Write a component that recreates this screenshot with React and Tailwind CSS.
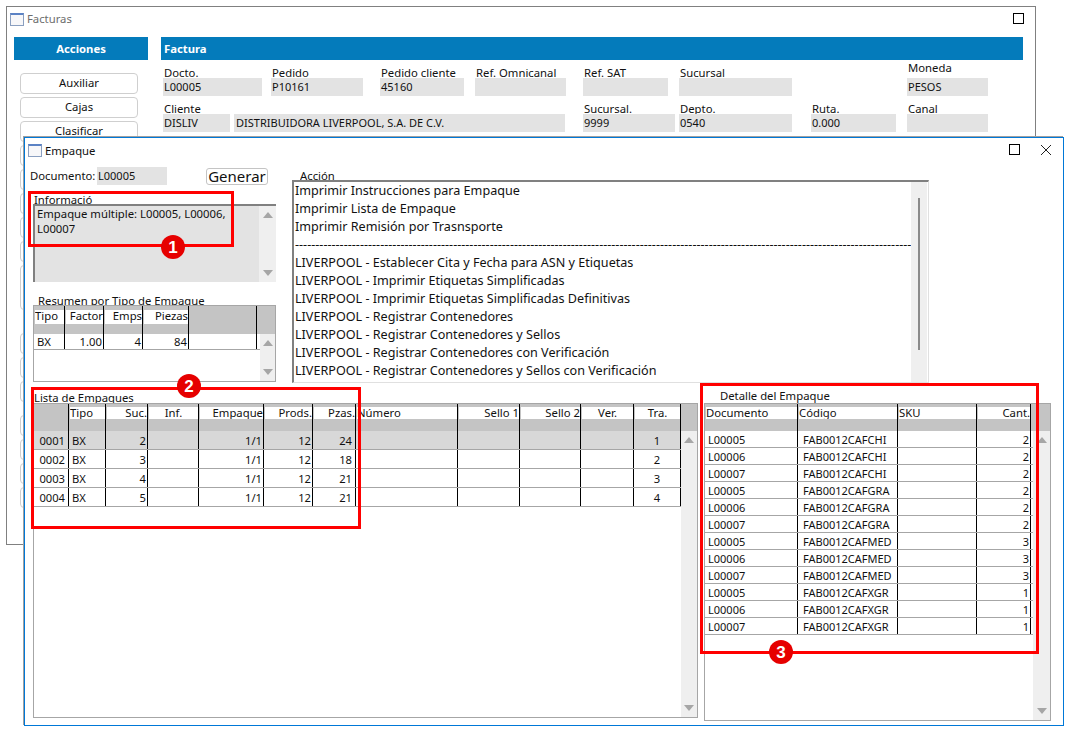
const F = "font-['Noto_Sans','Open_Sans',sans-serif]";

function Up() {
  return <svg width="10" height="6" viewBox="0 0 10 6" className="block"><polygon points="5,0 10,6 0,6" fill="#a6a6a6" /></svg>;
}
function Down() {
  return <svg width="10" height="6" viewBox="0 0 10 6" className="block"><polygon points="0,0 10,0 5,6" fill="#a6a6a6" /></svg>;
}
function Scroll({ className }) {
  return (
    <div className={"flex flex-col items-center justify-between bg-[#efefef] " + className}>
      <Up />
      <Down />
    </div>
  );
}

function Field({ label, value, wrap, labelBox = "h-[11px]" }) {
  return (
    <div className={wrap}>
      <div className={"overflow-hidden whitespace-nowrap leading-[12px] pl-[1px] " + labelBox}>{label}</div>
      <div className="h-[18px] bg-[#e3e3e3] text-[11px] leading-[18px] pl-[1px] whitespace-nowrap">{value}</div>
    </div>
  );
}

function Btn({ children, className = "h-[21px]" }) {
  return (
    <div className={"w-[118px] shrink-0 rounded-[4px] border border-[#cfcfcf] bg-white text-center leading-[18px] " + className}>
      {children}
    </div>
  );
}

function WinIcon() {
  return <div className="h-[13px] w-[14px] shrink-0 border border-[#8a9fc0] border-t-2 border-t-[#5b82c4] bg-[#f7f7f9]" />;
}

function Grid({ cols, rows, headH, rowH, className, strip, scroll, cellText = "" }) {
  return (
    <div className={"flex flex-col border border-[#a6a6a6] bg-white " + className}>
      <div className={"flex shrink-0 bg-[#c4c4c4] " + headH}>
        {cols.map((c, i) => (
          <div key={i} className={"shrink-0 border-r border-black pl-[1px] " + c.w}>
            {c.label !== undefined && (
              <div className={"overflow-hidden whitespace-nowrap bg-white leading-[12px] " + strip + " " + (c.h || "text-left")}>{c.label}</div>
            )}
          </div>
        ))}
      </div>
      <div className="flex min-h-0 flex-1">
        <div className="min-w-0 flex-1">
          {rows.map((r, ri) => (
            <div key={ri} className={"flex border-b border-[#a6a6a6] " + rowH + " " + (r.sel ? "bg-[#d8d8d8]" : "")}>
              {cols.map((c, i) => (
                <div key={i} className={"shrink-0 overflow-hidden whitespace-nowrap border-r border-black " + c.w + " " + (c.a || "text-left pl-[3px]") + " " + cellText}>
                  {r.v[i]}
                </div>
              ))}
            </div>
          ))}
        </div>
        {scroll}
      </div>
    </div>
  );
}

const resumenCols = [
  { w: "w-[31px]", label: "Tipo", a: "pl-[3px]" },
  { w: "w-[39px]", label: "Factor", h: "text-right", a: "text-right pr-[1px]" },
  { w: "w-[39px]", label: "Emps", h: "text-right", a: "text-right pr-[1px]" },
  { w: "w-[46px]", label: "Piezas", h: "text-right", a: "text-right pr-[1px]" },
  { w: "w-[68px]" },
];

const listaCols = [
  { w: "w-[35px]", a: "text-right pr-[3px]" },
  { w: "w-[37px]", label: "Tipo", a: "pl-[3px]" },
  { w: "w-[42px]", label: "Suc.", h: "text-right", a: "text-right pr-[1px]" },
  { w: "w-[51px]", label: "Inf.", h: "text-center" },
  { w: "w-[65px]", label: "Empaque", h: "text-right", a: "text-right pr-[1px]" },
  { w: "w-[49px]", label: "Prods.", h: "text-right", a: "text-right pr-[1px]" },
  { w: "w-[43px]", label: "Pzas.", h: "text-right", a: "text-right pr-[3px]" },
  { w: "w-[102px]", label: "Número" },
  { w: "w-[62px]", label: "Sello 1", h: "text-right" },
  { w: "w-[61px]", label: "Sello 2", h: "text-right" },
  { w: "w-[53px]", label: "Ver.", h: "text-center" },
  { w: "w-[47px]", label: "Tra.", h: "text-center", a: "text-center" },
];
const listaRows = [
  { sel: true, v: ["0001", "BX", "2", "", "1/1", "12", "24", "", "", "", "", "1"] },
  { v: ["0002", "BX", "3", "", "1/1", "12", "18", "", "", "", "", "2"] },
  { v: ["0003", "BX", "4", "", "1/1", "12", "21", "", "", "", "", "3"] },
  { v: ["0004", "BX", "5", "", "1/1", "12", "21", "", "", "", "", "4"] },
];

const detalleCols = [
  { w: "w-[93px]", label: "Documento", a: "pl-[3px]" },
  { w: "w-[100px]", label: "Código", a: "pl-[5px]" },
  { w: "w-[79px]", label: "SKU" },
  { w: "w-[54px]", label: "Cant.", h: "text-right", a: "text-right pr-[1px]" },
];
const codes = ["FAB0012CAFCHI", "FAB0012CAFGRA", "FAB0012CAFMED", "FAB0012CAFXGR"];
const qty = ["2", "2", "3", "1"];
const docs = ["L00005", "L00006", "L00007"];
const detalleRows = codes.flatMap((c, i) => docs.map((d) => ({ v: [d, c, "", qty[i]] })));

const acciones = [
  "Imprimir Instrucciones para Empaque",
  "Imprimir Lista de Empaque",
  "Imprimir Remisión por Trasnsporte",
  "---------------------------------------------------------------------------------------------------------------------------------------------------------",
  "LIVERPOOL - Establecer Cita y Fecha para ASN y Etiquetas",
  "LIVERPOOL - Imprimir Etiquetas Simplificadas",
  "LIVERPOOL - Imprimir Etiquetas Simplificadas Definitivas",
  "LIVERPOOL - Registrar Contenedores",
  "LIVERPOOL - Registrar Contenedores y Sellos",
  "LIVERPOOL - Registrar Contenedores con Verificación",
  "LIVERPOOL - Registrar Contenedores y Sellos con Verificación",
];

function Badge({ n, className }) {
  return (
    <div className={"absolute z-30 flex h-[24px] w-[24px] items-center justify-center rounded-full bg-[#e60000] text-[17px] font-bold leading-none text-white font-['Liberation_Sans',sans-serif] " + className}>
      {n}
    </div>
  );
}
function RedBox({ className }) {
  return <div className={"absolute z-20 border-[3px] border-[#ff0000] " + className} />;
}

export default function App() {
  return (
    <div className={"relative h-[734px] w-[1071px] overflow-hidden bg-white text-[11.3px] text-[#111] " + F}>
      {/* Facturas window */}
      <div className="absolute left-[6px] top-[6px] flex h-[539px] w-[1030px] flex-col border border-[#808080] bg-white">
        <div className="flex h-[30px] shrink-0 items-start px-[3px] pt-[6px]">
          <WinIcon />
          <span className="ml-[3px] leading-[12px] text-[#6d6d6d]">Facturas</span>
          <div className="ml-auto mr-[8px] h-[11px] w-[11px] border border-black" />
        </div>
        <div className="flex flex-1 pl-[7px] pr-[12px]">
          <div className="w-[134px] shrink-0">
            <div className="h-[23px] bg-[#047bbb] text-center font-bold leading-[23px] text-white">Acciones</div>
            <div className="ml-[6px] mt-[13px] flex flex-col gap-[3px]">
              <Btn>Auxiliar</Btn>
              <Btn>Cajas</Btn>
              <Btn>Clasificar</Btn>
              <Btn />
              <Btn />
              <Btn />
              <Btn />
              <Btn />
              <Btn className="h-[45px]" />
              <Btn className="mt-[20px] h-[21px]" />
              <Btn />
              <Btn />
              <Btn className="mt-[10px] h-[21px]" />
              <Btn />
              <Btn />
              <Btn />
            </div>
          </div>
          <div className="ml-[13px] flex-1">
            <div className="h-[23px] bg-[#047bbb] pl-[3px] font-bold leading-[23px] text-white">Factura</div>
            <div className="ml-[2px] mt-[2px] flex items-end">
              <Field label="Docto." value="L00005" wrap="w-[99px] mr-[9px]" />
              <Field label="Pedido" value="P10161" wrap="w-[92px] mr-[17px]" />
              <Field label="Pedido cliente" value="45160" wrap="w-[84px] mr-[11px]" />
              <Field label="Ref. Omnicanal" value="" wrap="w-[91px] mr-[17px]" />
              <Field label="Ref. SAT" value="" wrap="w-[85px] mr-[11px]" />
              <Field label="Sucursal" value="" wrap="w-[113px] mr-[115px]" />
              <Field label="Moneda" value="PESOS" wrap="w-[81px]" labelBox="h-[16px]" />
            </div>
            <div className="ml-[2px] mt-[7px] flex items-end">
              <Field label="Cliente" value="DISLIV" wrap="w-[67px] mr-[4px]" />
              <Field label="" value={<span className="pl-[1px]">DISTRIBUIDORA LIVERPOOL, S.A. DE C.V.</span>} wrap="w-[331px] mr-[18px]" />
              <Field label="Sucursal." value="9999" wrap="w-[92px] mr-[4px]" />
              <Field label="Depto." value="0540" wrap="w-[113px] mr-[19px]" />
              <Field label="Ruta." value="0.000" wrap="w-[85px] mr-[11px]" />
              <Field label="Canal" value="" wrap="w-[81px]" />
            </div>
          </div>
        </div>
      </div>

      {/* Empaque window */}
      <div className="absolute left-[24px] top-[137px] z-10 flex h-[589px] w-[1040px] flex-col border border-[#0078d7] bg-white shadow-[-1px_-1px_0_#a0a0a0]">
        <div className="flex h-[26px] shrink-0 items-start px-[3px] pt-[6px]">
          <WinIcon />
          <span className="ml-[3px] leading-[13px]">Empaque</span>
          <div className="ml-auto flex items-start">
            <div className="h-[11px] w-[11px] border border-black" />
            <svg width="12" height="12" viewBox="0 0 12 12" className="ml-[20px] mr-[8px]">
              <path d="M1 1 L11 11 M11 1 L1 11" stroke="#222" strokeWidth="1" fill="none" />
            </svg>
          </div>
        </div>

        <div className="flex h-[219px] shrink-0">
          {/* left column */}
          <div className="w-[267px] shrink-0">
            <div className="flex h-[21px] items-start pl-[5px] pt-[3px]">
              <span className="w-[67px] whitespace-nowrap leading-[18px]">Documento:</span>
              <div className="h-[18px] w-[70px] bg-[#e3e3e3] pl-[1px] text-[11px] leading-[18px]">L00005</div>
              <div className="ml-[39px] mt-[1px] h-[17px] w-[62px] rounded-[3px] border border-[#c4c4c4] text-center text-[15px] leading-[15px]">Generar</div>
            </div>
            <div className="ml-[9px] mt-[8px] h-[11px] overflow-hidden leading-[14px]">Informació</div>
            <div className="ml-[8px] flex h-[78px] w-[243px] border-l-2 border-t-2 border-[#808080] bg-[#e3e3e3]">
              <div className="flex-1 whitespace-pre-line pl-[2px] leading-[15px]">{"Empaque múltiple: L00005, L00006,\nL00007"}</div>
              <Scroll className="w-[17px] py-[6px]" />
            </div>
            <div className="ml-[13px] mt-[12px] h-[11px] overflow-hidden leading-[14px]">Resumen por Tipo de Empaque</div>
            <Grid
              className="ml-[8px] h-[77px] w-[243px]"
              headH="h-[28px]"
              rowH="h-[16px] leading-[16px]"
              strip="mt-[4px] h-[14px]"
              cols={resumenCols}
              rows={[{ v: ["BX", "1.00", "4", "84", ""] }]}
              scroll={<Scroll className="w-[15px] py-[6px]" />}
            />
          </div>
          {/* accion column */}
          <div className="w-[637px] shrink-0">
            <div className="ml-[8px] h-[16px] overflow-hidden pt-[4px] leading-[15px]">Acción</div>
            <div className="flex h-[203px] border-b border-l-2 border-r border-t-2 border-b-[#e0e0e0] border-l-[#808080] border-r-[#e0e0e0] border-t-[#808080] pr-[1px]">
              <div className="min-w-0 flex-1 overflow-hidden whitespace-nowrap pl-[1px] text-[12.6px] leading-[18px]">
                {acciones.map((a) => <div key={a}>{a}</div>)}
              </div>
              <div className="flex w-[16px] shrink-0 justify-center bg-[#efefef] pt-[16px]">
                <div className="h-[152px] w-[2px] bg-[#8a8a8a]" />
              </div>
            </div>
          </div>
        </div>

        <div className="flex min-h-0 flex-1">
          {/* Lista */}
          <div className="ml-[8px] flex w-[665px] shrink-0 flex-col">
            <div className="ml-[1px] h-[20px] overflow-hidden pt-[8px] leading-[14px]">Lista de Empaques</div>
            <Grid
              className="h-[315px]"
              headH="h-[27px]"
              rowH="h-[19px] leading-[20px]"
              strip="mt-[3px] h-[12px]"
              cols={listaCols}
              rows={listaRows}
              cellText="text-[11.2px]"
              scroll={<Scroll className="ml-auto w-[16px] py-[6px]" />}
            />
          </div>
          {/* Detalle */}
          <div className="ml-[6px] flex w-[347px] shrink-0 flex-col">
            <div className="ml-[16px] h-[20px] overflow-hidden pt-[6px] leading-[14px]">Detalle del Empaque</div>
            <Grid
              className="h-[318px]"
              headH="h-[27px]"
              rowH="h-[17px] leading-[18px]"
              strip="mt-[3px] h-[12px]"
              cols={detalleCols}
              rows={detalleRows}
              cellText="text-[11px]"
              scroll={<Scroll className="ml-auto w-[17px] py-[6px]" />}
            />
          </div>
        </div>
      </div>

      {/* annotations */}
      <RedBox className="left-[28px] top-[191px] h-[56px] w-[206px]" />
      <RedBox className="left-[31px] top-[387px] h-[142px] w-[330px]" />
      <RedBox className="left-[700px] top-[383px] h-[271px] w-[339px]" />
      <Badge n="1" className="left-[161px] top-[235px]" />
      <Badge n="2" className="left-[177px] top-[374px]" />
      <Badge n="3" className="left-[769px] top-[640px]" />
    </div>
  );
}
